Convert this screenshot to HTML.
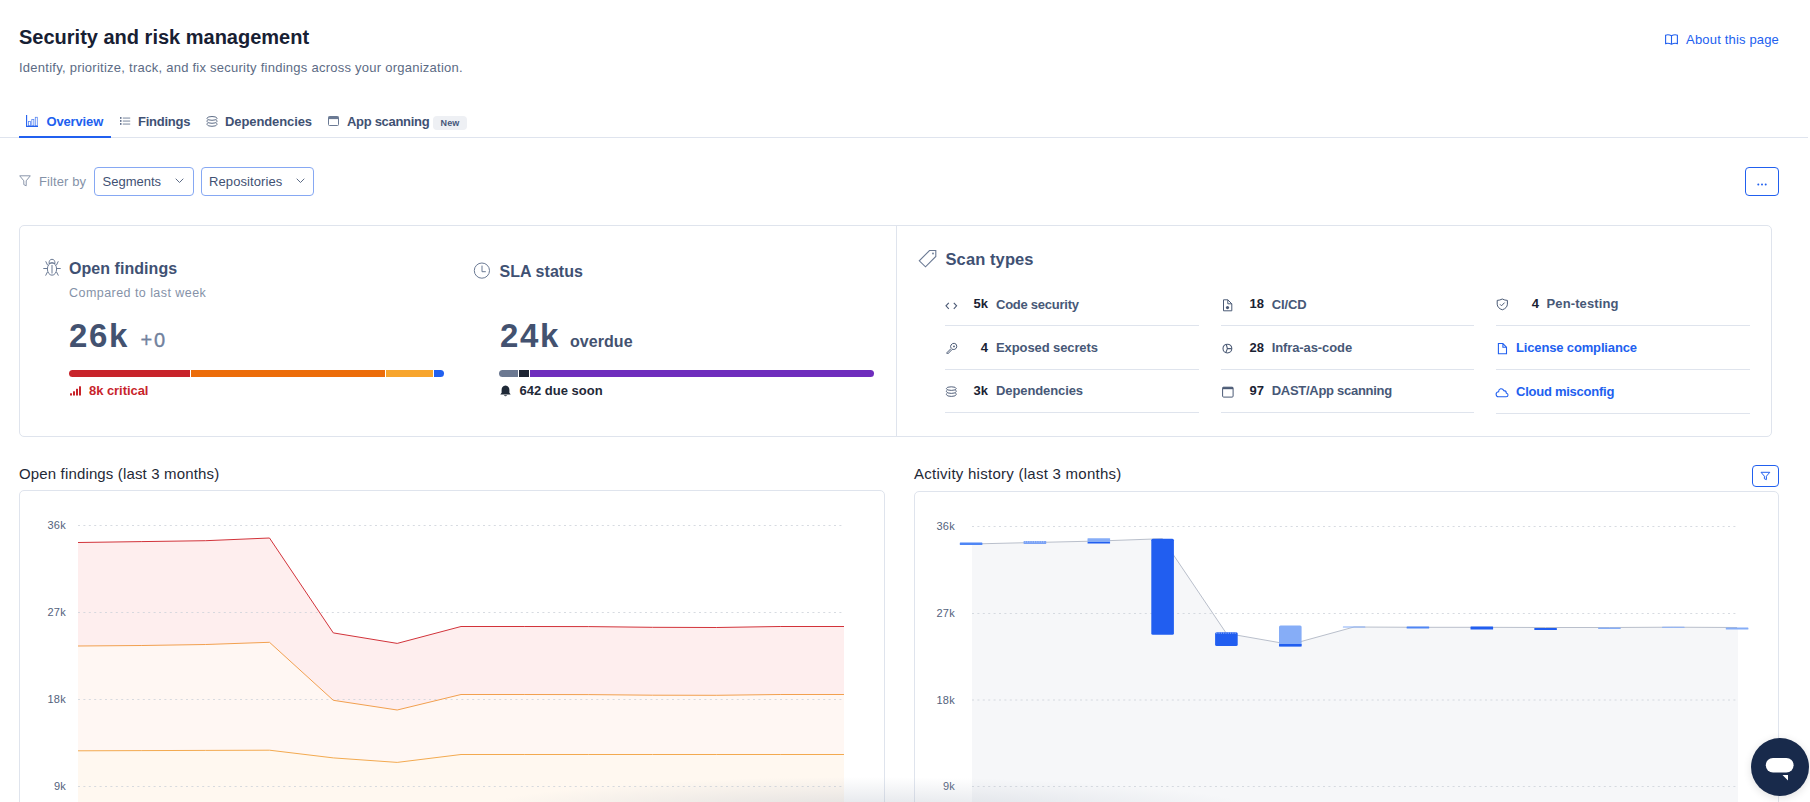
<!DOCTYPE html>
<html><head><meta charset="utf-8"><style>
html,body{margin:0;padding:0;background:#fff;width:1810px;height:802px;overflow:hidden;position:relative}
body{font-family:"Liberation Sans", sans-serif}
.t{position:absolute;white-space:nowrap;font-family:"Liberation Sans", sans-serif}
</style></head><body>
<div class="t" style="left:19px;top:27.07px;font-size:20px;line-height:20px;font-weight:bold;color:#172033;letter-spacing:0px;">Security and risk management</div>
<div class="t" style="left:19px;top:61.19px;font-size:13px;line-height:13px;font-weight:normal;color:#5c6b85;letter-spacing:0.25px;">Identify, prioritize, track, and fix security findings across your organization.</div>
<div class="t" style="right:31px;top:33.19px;font-size:13px;line-height:13px;font-weight:normal;color:#2160ef;letter-spacing:0.17px;">About this page</div>
<svg style="position:absolute;left:1665px;top:34px;" width="13" height="11" viewBox="0 0 13 11"><path d="M0.6 1.2 Q3.5 0.2 6.5 1.8 Q9.5 0.2 12.4 1.2 V9.6 Q9.5 8.8 6.5 10.2 Q3.5 8.8 0.6 9.6 Z M6.5 1.8 V10.2" fill="none" stroke="#2160ef" stroke-width="1.1"/></svg>
<div style="position:absolute;left:0px;top:137px;width:1808px;height:1px;background:#dfe4ee"></div>
<div style="position:absolute;left:19px;top:136px;width:92px;height:2px;background:#2160ef"></div>
<div class="t" style="left:46.5px;top:114.89px;font-size:13px;line-height:13px;font-weight:bold;color:#2160ef;letter-spacing:-0.15px;">Overview</div>
<svg style="position:absolute;left:26px;top:115px;" width="12" height="12" viewBox="0 0 12 12"><path d="M0.6 0 V11.4 H12" fill="none" stroke="#2160ef" stroke-width="1.1"/><g stroke-opacity="0.75"><rect x="2.4" y="6.5" width="2" height="4.3" fill="none" stroke="#2160ef" stroke-width="0.8"/><rect x="5.8" y="4.5" width="2" height="6.3" fill="none" stroke="#2160ef" stroke-width="0.8"/><rect x="9.3" y="2.3" width="2" height="8.5" fill="none" stroke="#2160ef" stroke-width="0.8"/></g></svg>
<div class="t" style="left:138px;top:114.89px;font-size:13px;line-height:13px;font-weight:bold;color:#3f5173;letter-spacing:-0.25px;">Findings</div>
<svg style="position:absolute;left:120px;top:117px;" width="11" height="8" viewBox="0 0 11 8"><g fill="#3f5173"><rect x="0" y="0.2" width="1.5" height="1.5"/><rect x="0" y="3.2" width="1.5" height="1.5"/><rect x="0" y="6.2" width="1.5" height="1.5"/></g><g fill="#6b7a94"><rect x="2.8" y="0.6" width="7.4" height="0.9"/><rect x="2.8" y="3.6" width="7.4" height="0.9"/><rect x="2.8" y="6.6" width="7.4" height="0.9"/></g></svg>
<div class="t" style="left:225px;top:114.89px;font-size:13px;line-height:13px;font-weight:bold;color:#3f5173;letter-spacing:-0.1px;">Dependencies</div>
<svg style="position:absolute;left:205.5px;top:115.5px;" width="12" height="11" viewBox="0 0 12 11"><g fill="none" stroke="#54647f" stroke-width="0.95"><path d="M1 2.4 Q1 0.5 6 0.5 Q11 0.5 11 2.4 Q11 4.3 6 4.3 Q1 4.3 1 2.4 Z"/><path d="M1.9 3.9 Q0.9 4.6 1 5.4 Q1.2 7.3 6 7.3 Q10.8 7.3 11 5.4 Q11.1 4.6 10.1 3.9"/><path d="M1.9 6.9 Q0.9 7.6 1 8.4 Q1.2 10.3 6 10.3 Q10.8 10.3 11 8.4 Q11.1 7.6 10.1 6.9"/></g></svg>
<div class="t" style="left:347px;top:114.89px;font-size:13px;line-height:13px;font-weight:bold;color:#3f5173;letter-spacing:-0.3px;">App scanning</div>
<svg style="position:absolute;left:328px;top:116px;" width="11" height="10" viewBox="0 0 11 10"><rect x="0.5" y="0.5" width="10" height="9" rx="1" fill="none" stroke="#6b7a94" stroke-width="1"/><rect x="0.5" y="0.5" width="10" height="2.6" fill="#6b7a94"/></svg>
<div style="position:absolute;left:433px;top:116px;width:34px;height:14px;background:#eef0f4;border-radius:4px"></div>
<div class="t" style="left:440.5px;top:119.18px;font-size:9px;line-height:9px;font-weight:bold;color:#46577a;letter-spacing:0.15px;">New</div>
<svg style="position:absolute;left:19px;top:175px;" width="12" height="12" viewBox="0 0 12 12"><path d="M0.7 0.8 H11.3 L7.2 5.8 V10.8 L4.8 9.6 V5.8 Z" fill="none" stroke="#8a96ab" stroke-width="1"/></svg>
<div class="t" style="left:39px;top:175.49px;font-size:13px;line-height:13px;font-weight:normal;color:#8592a8;letter-spacing:0.1px;">Filter by</div>
<div style="position:absolute;left:94px;top:167px;width:100px;height:29px;box-sizing:border-box;border:1px solid #86a8f3;border-radius:4px"></div>
<div class="t" style="left:102.5px;top:175.49px;font-size:13px;line-height:13px;font-weight:normal;color:#3f5173;letter-spacing:0px;">Segments</div>
<svg style="position:absolute;left:175px;top:178px;" width="9" height="6" viewBox="0 0 9 6"><path d="M0.7 0.7 L4.5 4.5 L8.3 0.7" fill="none" stroke="#5d6c86" stroke-width="1"/></svg>
<div style="position:absolute;left:201px;top:167px;width:113px;height:29px;box-sizing:border-box;border:1px solid #86a8f3;border-radius:4px"></div>
<div class="t" style="left:209px;top:175.49px;font-size:13px;line-height:13px;font-weight:normal;color:#3f5173;letter-spacing:0.1px;">Repositories</div>
<svg style="position:absolute;left:296px;top:178px;" width="9" height="6" viewBox="0 0 9 6"><path d="M0.7 0.7 L4.5 4.5 L8.3 0.7" fill="none" stroke="#5d6c86" stroke-width="1"/></svg>
<div style="position:absolute;left:1745px;top:167px;width:34px;height:29px;box-sizing:border-box;border:1.3px solid #2160ef;border-radius:4px"></div>
<svg style="position:absolute;left:1757px;top:183px;" width="10" height="3" viewBox="0 0 10 3"><g fill="#2160ef"><circle cx="1.3" cy="1.5" r="1"/><circle cx="5" cy="1.5" r="1"/><circle cx="8.7" cy="1.5" r="1"/></g></svg>
<div style="position:absolute;left:19px;top:225px;width:1753px;height:212px;box-sizing:border-box;border:1px solid #dfe4ed;border-radius:5px"></div>
<div style="position:absolute;left:896px;top:226px;width:1px;height:210px;background:#dfe4ed"></div>
<svg style="position:absolute;left:43px;top:258px;" width="18" height="19" viewBox="0 0 18 19"><g fill="none" stroke="#6b7a94" stroke-width="1"><ellipse cx="9" cy="11" rx="4.6" ry="6.2"/><path d="M6 5.6 Q6 1.3 9 1.3 Q12 1.3 12 5.6 Q9 4 6 5.6 Z"/><path d="M9 7 V15.5"/><path d="M0.3 10.5 H4.4 M13.6 10.5 H17.7 M2.7 3.3 L4.6 7.2 M15.3 3.3 L13.4 7.2 M2.6 17.6 L4.5 13.9 M15.4 17.6 L13.5 13.9"/></g></svg>
<div class="t" style="left:69px;top:260.85px;font-size:16px;line-height:16px;font-weight:bold;color:#3f5173;letter-spacing:0.05px;">Open findings</div>
<div class="t" style="left:69px;top:287.42px;font-size:12.5px;line-height:12.5px;font-weight:normal;color:#8592a8;letter-spacing:0.45px;">Compared to last week</div>
<div class="t" style="left:69px;top:318.86px;font-size:33px;line-height:33px;font-weight:bold;color:#435270;letter-spacing:1.7px;">26k</div>
<div class="t" style="left:140.5px;top:329.77px;font-size:20px;line-height:20px;font-weight:normal;color:#71819d;letter-spacing:1.8px;-webkit-text-stroke:0.35px #71819d;">+0</div>
<div style="position:absolute;left:69px;top:370px;width:375px;height:7px;border-radius:4px;overflow:hidden;background:linear-gradient(90deg,#c8242b 0,#c8242b 121px,#fff 121px,#fff 122px,#ec6d0a 122px,#ec6d0a 316px,#fff 316px,#fff 317px,#f7a52d 317px,#f7a52d 364px,#fff 364px,#fff 365px,#2160ef 365px)"></div>
<svg style="position:absolute;left:70px;top:386px;" width="11" height="10" viewBox="0 0 11 10"><g fill="#c8242b"><rect x="0" y="7.3" width="2" height="2.2"/><rect x="3" y="5.3" width="2" height="4.2"/><rect x="6" y="2.8" width="2" height="6.7"/><rect x="9" y="0.3" width="2" height="9.2"/></g></svg>
<div class="t" style="left:89px;top:383.99px;font-size:13px;line-height:13px;font-weight:bold;color:#c8242b;letter-spacing:-0.05px;">8k critical</div>
<svg style="position:absolute;left:473px;top:262px;" width="18" height="18" viewBox="0 0 18 18"><g fill="none" stroke="#6b7a94" stroke-width="1"><circle cx="8.9" cy="8.6" r="7.6"/><path d="M9 3.6 V9.7 H12.8"/></g></svg>
<div class="t" style="left:499.5px;top:263.95px;font-size:16px;line-height:16px;font-weight:bold;color:#3f5173;letter-spacing:0.05px;">SLA status</div>
<div class="t" style="left:500px;top:319.36px;font-size:33px;line-height:33px;font-weight:bold;color:#435270;letter-spacing:1.7px;">24k</div>
<div class="t" style="left:570px;top:333.75px;font-size:16px;line-height:16px;font-weight:bold;color:#435270;letter-spacing:0.05px;">overdue</div>
<div style="position:absolute;left:499px;top:370px;width:375px;height:7px;border-radius:4px;overflow:hidden;background:linear-gradient(90deg,#6b7891 0,#6b7891 19px,#fff 19px,#fff 20px,#1d2433 20px,#1d2433 30px,#fff 30px,#fff 31px,#6f2dbd 31px)"></div>
<svg style="position:absolute;left:500px;top:385px;" width="11" height="12" viewBox="0 0 11 12"><path d="M5.5 0.5 C2.8 0.5 1.6 2.8 1.6 5 V7.8 L0.3 9.6 H10.7 L9.4 7.8 V5 C9.4 2.8 8.2 0.5 5.5 0.5 Z M3.8 10.3 Q5.5 12.3 7.2 10.3 Z" fill="#1f2937"/></svg>
<div class="t" style="left:519.5px;top:383.99px;font-size:13px;line-height:13px;font-weight:bold;color:#1f2937;letter-spacing:0px;">642 due soon</div>
<svg style="position:absolute;left:918px;top:249px;" width="20" height="19" viewBox="0 0 20 19"><g fill="none" stroke="#6b7a94" stroke-width="1.1"><path d="M11.5 1.5 H17.8 V7.5 L7.5 17.8 L1.3 11.8 Z"/></g><circle cx="15" cy="4.5" r="0.9" fill="#6b7a94"/></svg>
<div class="t" style="left:945.5px;top:251.03px;font-size:16.5px;line-height:16.5px;font-weight:bold;color:#3f5173;letter-spacing:0.1px;">Scan types</div>
<div style="position:absolute;left:945px;top:325px;width:254px;height:1.3px;background:#dfe4ed"></div>
<div style="position:absolute;left:945px;top:369px;width:254px;height:1.3px;background:#dfe4ed"></div>
<div style="position:absolute;left:945px;top:412px;width:254px;height:1.3px;background:#dfe4ed"></div>
<div style="position:absolute;left:1221px;top:325px;width:253px;height:1.3px;background:#dfe4ed"></div>
<div style="position:absolute;left:1221px;top:369px;width:253px;height:1.3px;background:#dfe4ed"></div>
<div style="position:absolute;left:1221px;top:412px;width:253px;height:1.3px;background:#dfe4ed"></div>
<div style="position:absolute;left:1496px;top:325px;width:254px;height:1.3px;background:#dfe4ed"></div>
<div style="position:absolute;left:1496px;top:369px;width:254px;height:1.3px;background:#dfe4ed"></div>
<div style="position:absolute;left:1496px;top:413px;width:254px;height:1.3px;background:#dfe4ed"></div>
<svg style="position:absolute;left:945px;top:302px;" width="13" height="8" viewBox="0 0 13 8"><path d="M3.8 0.8 L1 3.8 L3.8 6.8 M8.8 0.8 L11.6 3.8 L8.8 6.8" fill="none" stroke="#4b5a75" stroke-width="1.1"/></svg>
<div class="t" style="right:822px;top:296.99px;font-size:13px;line-height:13px;font-weight:bold;color:#1a2233;letter-spacing:0px;">5k</div>
<div class="t" style="left:996px;top:297.79px;font-size:13px;line-height:13px;font-weight:bold;color:#475877;letter-spacing:-0.25px;">Code security</div>
<svg style="position:absolute;left:945px;top:342px;" width="13" height="13" viewBox="0 0 13 13"><g fill="none" stroke="#4b5a75" stroke-width="1"><path d="M6.2 6.2 Q5 4.6 6 3 Q7.2 1.2 9.2 1.3 Q11.6 1.6 11.8 4.2 Q11.8 6.6 9.8 7.3 Q8 7.8 6.8 7"/><path d="M6.2 6.4 L1.6 11 L2.6 12 L7 7.6"/></g><circle cx="9" cy="4.4" r="0.9" fill="#4b5a75"/></svg>
<div class="t" style="right:822px;top:340.99px;font-size:13px;line-height:13px;font-weight:bold;color:#1a2233;letter-spacing:0px;">4</div>
<div class="t" style="left:996px;top:340.99px;font-size:13px;line-height:13px;font-weight:bold;color:#475877;letter-spacing:-0.1px;">Exposed secrets</div>
<svg style="position:absolute;left:945px;top:386px;" width="13" height="12" viewBox="0 0 13 12"><g fill="none" stroke="#4b5a75" stroke-width="0.95"><path d="M1.4 2.6 Q1.4 0.8 6.3 0.8 Q11.2 0.8 11.2 2.6 Q11.2 4.4 6.3 4.4 Q1.4 4.4 1.4 2.6 Z"/><path d="M2.3 4 Q1.3 4.7 1.4 5.5 Q1.6 7.4 6.3 7.4 Q11 7.4 11.2 5.5 Q11.3 4.7 10.3 4"/><path d="M2.3 7 Q1.3 7.7 1.4 8.5 Q1.6 10.4 6.3 10.4 Q11 10.4 11.2 8.5 Q11.3 7.7 10.3 7"/></g></svg>
<div class="t" style="right:822px;top:384.49px;font-size:13px;line-height:13px;font-weight:bold;color:#1a2233;letter-spacing:0px;">3k</div>
<div class="t" style="left:996px;top:384.49px;font-size:13px;line-height:13px;font-weight:bold;color:#475877;letter-spacing:-0.1px;">Dependencies</div>
<svg style="position:absolute;left:1222px;top:299px;" width="11" height="13" viewBox="0 0 11 13"><g fill="none" stroke="#4b5a75" stroke-width="1"><path d="M1.5 0.8 H5.8 L9.8 4.8 V11.8 H1.5 Z M5.8 0.8 V4.8 H9.8"/></g><circle cx="5.5" cy="8.6" r="1.6" fill="#4b5a75"/></svg>
<div class="t" style="right:546px;top:296.99px;font-size:13px;line-height:13px;font-weight:bold;color:#1a2233;letter-spacing:0px;">18</div>
<div class="t" style="left:1271.7px;top:297.79px;font-size:13px;line-height:13px;font-weight:bold;color:#475877;letter-spacing:-0.1px;">CI/CD</div>
<svg style="position:absolute;left:1222px;top:343px;" width="11" height="11" viewBox="0 0 11 11"><g fill="none" stroke="#4b5a75" stroke-width="1.1"><circle cx="5.4" cy="5.6" r="4.4"/><path d="M5.4 5.6 L4.3 1.5 M5.4 5.6 L9.6 5.6 M5.4 5.6 L3.8 9.6"/></g></svg>
<div class="t" style="right:546px;top:340.99px;font-size:13px;line-height:13px;font-weight:bold;color:#1a2233;letter-spacing:0px;">28</div>
<div class="t" style="left:1271.7px;top:340.99px;font-size:13px;line-height:13px;font-weight:bold;color:#475877;letter-spacing:-0.1px;">Infra-as-code</div>
<svg style="position:absolute;left:1222px;top:386px;" width="12" height="12" viewBox="0 0 12 12"><rect x="0.6" y="1.2" width="10.5" height="9.9" rx="1" fill="none" stroke="#4b5a75" stroke-width="1"/><rect x="0.6" y="1.2" width="10.5" height="2" fill="#4b5a75"/></svg>
<div class="t" style="right:546px;top:384.49px;font-size:13px;line-height:13px;font-weight:bold;color:#1a2233;letter-spacing:0px;">97</div>
<div class="t" style="left:1271.7px;top:384.49px;font-size:13px;line-height:13px;font-weight:bold;color:#475877;letter-spacing:-0.28px;">DAST/App scanning</div>
<svg style="position:absolute;left:1496px;top:298px;" width="13" height="13" viewBox="0 0 13 13"><path d="M6.3 1 Q3.8 2.3 1.2 2.4 V6.2 Q1.5 10.2 6.3 11.8 Q11.1 10.2 11.4 6.2 V2.4 Q8.8 2.3 6.3 1 Z" fill="none" stroke="#4b5a75" stroke-width="1"/><path d="M4 6.3 L5.5 7.8 L8.6 4.6" fill="none" stroke="#4b5a75" stroke-width="1"/></svg>
<div class="t" style="right:271px;top:296.99px;font-size:13px;line-height:13px;font-weight:bold;color:#1a2233;letter-spacing:0px;">4</div>
<div class="t" style="left:1546.5px;top:296.99px;font-size:13px;line-height:13px;font-weight:bold;color:#475877;letter-spacing:0.12px;">Pen-testing</div>
<svg style="position:absolute;left:1497px;top:342px;" width="11" height="13" viewBox="0 0 11 13"><path d="M1.4 1.5 H5.9 L9.5 5.2 V11.8 H1.4 Z M5.9 1.5 V5.2 H9.5" fill="none" stroke="#2160ef" stroke-width="1.1"/></svg>
<div class="t" style="left:1516px;top:340.99px;font-size:13px;line-height:13px;font-weight:bold;color:#2160ef;letter-spacing:-0.15px;">License compliance</div>
<svg style="position:absolute;left:1495px;top:387px;" width="14" height="11" viewBox="0 0 14 11"><path d="M3.4 9.8 H11.2 Q13 9.8 13 8 Q13 6.4 11.4 6.3 Q11.2 3.5 8.8 3.6 Q7.8 1.4 5.6 1.8 Q3.6 2.3 3.6 4.7 Q1.2 4.9 1.1 7.2 Q1.2 9.8 3.4 9.8 Z" fill="none" stroke="#2160ef" stroke-width="1.1"/></svg>
<div class="t" style="left:1516px;top:385.29px;font-size:13px;line-height:13px;font-weight:bold;color:#2160ef;letter-spacing:-0.25px;">Cloud misconfig</div>
<div class="t" style="left:19px;top:466.30px;font-size:15px;line-height:15px;font-weight:normal;color:#1f2937;letter-spacing:0.15px;">Open findings (last 3 months)</div>
<div class="t" style="left:914px;top:466.30px;font-size:15px;line-height:15px;font-weight:normal;color:#1f2937;letter-spacing:0.26px;">Activity history (last 3 months)</div>
<div style="position:absolute;left:19px;top:490px;width:866px;height:340px;box-sizing:border-box;border:1px solid #dfe4ed;border-radius:5px"></div>
<div style="position:absolute;left:914px;top:491px;width:865px;height:340px;box-sizing:border-box;border:1px solid #dfe4ed;border-radius:5px"></div>
<div style="position:absolute;left:1752px;top:465px;width:27px;height:22px;box-sizing:border-box;border:1.3px solid #2160ef;border-radius:4px"></div>
<svg style="position:absolute;left:1760px;top:471px;" width="11" height="10" viewBox="0 0 11 10"><path d="M1 1.3 H9.8 L6.4 5.2 V8.6 L4.4 7.8 V5.2 Z" fill="none" stroke="#2160ef" stroke-width="1"/></svg>
<svg style="position:absolute;left:0;top:0" width="1810" height="802"><polygon points="78.0,542.5 141.8,541.6 205.7,540.7 269.5,538.0 333.3,632.9 397.2,643.4 461.0,626.5 524.8,626.5 588.7,626.6 652.5,627.3 716.3,627.5 780.2,626.5 844.0,626.5 844.0,830.0 78.0,830.0" fill="#feeeee"/><polygon points="78.0,646.0 141.8,645.5 205.7,644.5 269.5,642.3 333.3,700.3 397.2,710.0 461.0,694.5 524.8,694.5 588.7,694.6 652.5,695.2 716.3,695.3 780.2,694.5 844.0,694.5 844.0,830.0 78.0,830.0" fill="#fff7f3"/><polygon points="78.0,750.8 141.8,750.6 205.7,750.4 269.5,750.2 333.3,757.9 397.2,762.4 461.0,754.5 524.8,754.5 588.7,754.5 652.5,754.5 716.3,754.5 780.2,754.5 844.0,754.5 844.0,830.0 78.0,830.0" fill="#fff8f0"/><line x1="78" y1="525.5" x2="842" y2="525.5" stroke="#cdd2da" stroke-opacity="0.8" stroke-width="1" stroke-dasharray="2 3.4"/><line x1="78" y1="612.5" x2="842" y2="612.5" stroke="#cdd2da" stroke-opacity="0.8" stroke-width="1" stroke-dasharray="2 3.4"/><line x1="78" y1="699.5" x2="842" y2="699.5" stroke="#cdd2da" stroke-opacity="0.8" stroke-width="1" stroke-dasharray="2 3.4"/><line x1="78" y1="786.5" x2="842" y2="786.5" stroke="#cdd2da" stroke-opacity="0.8" stroke-width="1" stroke-dasharray="2 3.4"/><polyline points="78.0,542.5 141.8,541.6 205.7,540.7 269.5,538.0 333.3,632.9 397.2,643.4 461.0,626.5 524.8,626.5 588.7,626.6 652.5,627.3 716.3,627.5 780.2,626.5 844.0,626.5" fill="none" stroke="#d2333a" stroke-width="1"/><polyline points="78.0,646.0 141.8,645.5 205.7,644.5 269.5,642.3 333.3,700.3 397.2,710.0 461.0,694.5 524.8,694.5 588.7,694.6 652.5,695.2 716.3,695.3 780.2,694.5 844.0,694.5" fill="none" stroke="#f2a04f" stroke-width="1"/><polyline points="78.0,750.8 141.8,750.6 205.7,750.4 269.5,750.2 333.3,757.9 397.2,762.4 461.0,754.5 524.8,754.5 588.7,754.5 652.5,754.5 716.3,754.5 780.2,754.5 844.0,754.5" fill="none" stroke="#f3aa50" stroke-width="1"/></svg>
<div class="t" style="right:1744px;top:519.69px;font-size:11px;line-height:11px;font-weight:normal;color:#53627c;letter-spacing:0.25px;">36k</div>
<div class="t" style="right:1744px;top:606.69px;font-size:11px;line-height:11px;font-weight:normal;color:#53627c;letter-spacing:0.25px;">27k</div>
<div class="t" style="right:1744px;top:693.69px;font-size:11px;line-height:11px;font-weight:normal;color:#53627c;letter-spacing:0.25px;">18k</div>
<div class="t" style="right:1744px;top:780.69px;font-size:11px;line-height:11px;font-weight:normal;color:#53627c;letter-spacing:0.25px;">9k</div>
<svg style="position:absolute;left:0;top:0" width="1810" height="802"><polygon points="972.0,544.0 1034.8,542.5 1098.7,541.0 1162.5,538.7 1226.3,633.3 1290.2,644.5 1354.0,627.0 1417.8,627.3 1481.7,627.3 1545.5,627.5 1609.3,627.5 1673.2,627.2 1738.0,627.5 1738.0,830.0 972.0,830.0" fill="#f6f7f9"/><line x1="972" y1="526.5" x2="1736" y2="526.5" stroke="#cdd2da" stroke-opacity="0.8" stroke-width="1" stroke-dasharray="2 3.4"/><line x1="972" y1="613.5" x2="1736" y2="613.5" stroke="#cdd2da" stroke-opacity="0.8" stroke-width="1" stroke-dasharray="2 3.4"/><line x1="972" y1="700.0" x2="1736" y2="700.0" stroke="#cdd2da" stroke-opacity="0.8" stroke-width="1" stroke-dasharray="2 3.4"/><line x1="972" y1="786.5" x2="1736" y2="786.5" stroke="#cdd2da" stroke-opacity="0.8" stroke-width="1" stroke-dasharray="2 3.4"/><polyline points="971.0,544.0 1034.8,542.5 1098.7,541.0 1162.5,538.7 1226.3,633.3 1290.2,644.5 1354.0,627.0 1417.8,627.3 1481.7,627.3 1545.5,627.5 1609.3,627.5 1673.2,627.2 1737.0,627.5" fill="none" stroke="#b9bfcb" stroke-width="1"/><rect x="959.8" y="542.4" width="22.6" height="2.5" rx="0.5" fill="#4f86f5"/><rect x="1023.6" y="541" width="22.6" height="2.9" rx="0.5" fill="#7aa2f5"/><line x1="1024.8" y1="541.9" x2="1045.0" y2="541.9" stroke="#c9dafc" stroke-width="0.9" stroke-dasharray="1 1.3"/><rect x="1087.5" y="538.2" width="22.6" height="3.7" rx="0.5" fill="#86adf7"/><rect x="1087.5" y="541.9" width="22.6" height="1.5" rx="0.5" fill="#215ef0"/><rect x="1151.3" y="538.7" width="22.6" height="96.0" rx="1.5" fill="#215ef0"/><rect x="1215.1" y="632.2" width="22.6" height="13.7" rx="1.5" fill="#215ef0"/><line x1="1216.3" y1="633.1" x2="1236.5" y2="633.1" stroke="#c9dafc" stroke-width="0.9" stroke-dasharray="1 1.3"/><rect x="1279.0" y="625.4" width="22.6" height="21.2" rx="1.5" fill="#86adf7"/><rect x="1279.0" y="644.1" width="22.6" height="2.5" rx="0.5" fill="#215ef0"/><rect x="1342.8" y="626.5" width="22.6" height="1.1" rx="0.5" fill="#86adf7"/><rect x="1406.6" y="626.5" width="22.6" height="2.0" rx="0.5" fill="#4f86f5"/><rect x="1470.5" y="626.5" width="22.6" height="3.0" rx="0.5" fill="#215ef0"/><rect x="1534.3" y="628" width="22.6" height="2.0" rx="0.5" fill="#215ef0"/><rect x="1598.1" y="627.5" width="22.6" height="1.5" rx="0.5" fill="#86adf7"/><rect x="1662.0" y="626.8" width="22.6" height="1.0" rx="0.5" fill="#86adf7"/><rect x="1725.8" y="627.5" width="22.6" height="2.0" rx="0.5" fill="#86adf7"/></svg>
<div class="t" style="right:855px;top:521.39px;font-size:11px;line-height:11px;font-weight:normal;color:#53627c;letter-spacing:0.25px;">36k</div>
<div class="t" style="right:855px;top:608.39px;font-size:11px;line-height:11px;font-weight:normal;color:#53627c;letter-spacing:0.25px;">27k</div>
<div class="t" style="right:855px;top:694.89px;font-size:11px;line-height:11px;font-weight:normal;color:#53627c;letter-spacing:0.25px;">18k</div>
<div class="t" style="right:855px;top:781.39px;font-size:11px;line-height:11px;font-weight:normal;color:#53627c;letter-spacing:0.25px;">9k</div>
<div style="position:absolute;left:418px;top:772px;width:900px;height:40px;background:radial-gradient(ellipse at 50% 100%, rgba(170,178,192,0.38) 0%, rgba(200,205,215,0.0) 62%)"></div>
<div style="position:absolute;left:1751px;top:738px;width:58px;height:58px;border-radius:50%;background:#182a4b;box-shadow:0 2px 8px rgba(0,0,0,0.12)"></div>
<svg style="position:absolute;left:1765px;top:757px;" width="30" height="25" viewBox="0 0 30 25"><rect x="0.8" y="1" width="27.8" height="14.5" rx="7.2" fill="#fff"/><path d="M17.5 18 H23 V23.5 Z" fill="#fff"/></svg>
</body></html>
